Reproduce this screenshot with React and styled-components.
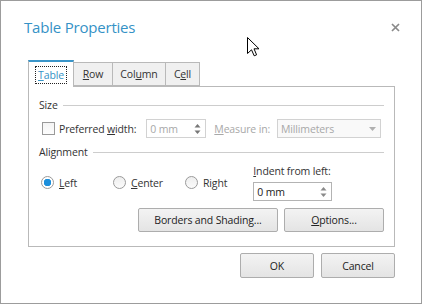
import React from "react";
import styled, { createGlobalStyle } from "styled-components";

const Global = createGlobalStyle`
  html, body { margin: 0; padding: 0; background: #fff; }
  body {
    font-family: "Open Sans", "Noto Sans", sans-serif;
    font-size: 10.5px;
    letter-spacing: -0.15px;
    color: #1e1e1e;
  }
  * { box-sizing: border-box; }
`;

const Dialog = styled.div`
  position: relative;
  width: 422px;
  height: 304px;
  border: 1px solid #9c9c9c;
  background: #fff;
  display: flex;
  flex-direction: column;
`;

const Header = styled.div`
  display: flex;
  align-items: center;
  justify-content: space-between;
  padding: 15px 21px 0 23px;
  height: 37px;
`;

const Title = styled.h1`
  margin: 0;
  font-weight: 400;
  font-size: 15px;
  letter-spacing: -0.2px;
  line-height: 22px;
  color: #3592c6;
`;

const Close = styled.button`
  border: 0;
  background: none;
  padding: 0;
  width: 9px;
  height: 9px;
  display: flex;
`;

const Body = styled.div`
  padding: 21px 26px 0 27px;
  display: flex;
  flex-direction: column;
`;

const TabRow = styled.div`
  display: flex;
  align-items: flex-end;
  height: 27px;
  position: relative;
  z-index: 1;
`;

const Tab = styled.div`
  width: ${(p) => p.$w}px;
  height: ${(p) => (p.$active ? "27px" : "24px")};
  margin-bottom: ${(p) => (p.$active ? "-1px" : "0")};
  border: 1px solid #b9b9b9;
  border-top: ${(p) => (p.$active ? "2px solid #3a95c9" : "1px solid #b9b9b9")};
  border-bottom: ${(p) => (p.$active ? "none" : "1px solid #b9b9b9")};
  margin-left: ${(p) => (p.$first ? "0" : "-1px")};
  background: ${(p) => (p.$active ? "#fff" : "#f0f0f0")};
  color: ${(p) => (p.$active ? "#3592c6" : "#333")};
  display: flex;
  align-items: center;
  justify-content: center;
  line-height: 14px;
`;

const Focus = styled.span`
  outline: 1px dotted #222;
  outline-offset: 1px;
  padding: 0 1px;
`;

const Panel = styled.div`
  border: 1px solid #b9b9b9;
  height: 161px;
  padding: 10px 10px 11px 10px;
  display: flex;
  flex-direction: column;
`;

const GroupHeader = styled.div`
  display: flex;
  align-items: center;
  height: 16px;
  margin-top: ${(p) => p.$mt || 0}px;
  color: #333;
  &::after {
    content: "";
    flex: 1;
    height: 1px;
    background: #cdcdcd;
    margin-left: 5px;
  }
`;

const Row = styled.div`
  display: flex;
  align-items: center;
  margin-top: ${(p) => p.$mt || 0}px;
  padding-left: ${(p) => p.$pl || 0}px;
`;

const Checkbox = styled.span`
  width: 13px;
  height: 13px;
  border: 1px solid #9a9a9a;
  background: linear-gradient(#f4f4f4, #fdfdfd);
  margin-right: 4px;
`;

const Label = styled.span`
  color: ${(p) => (p.$disabled ? "#a8a8a8" : "#333")};
  margin-left: ${(p) => p.$ml || 0}px;
  white-space: nowrap;
`;

const Field = styled.div`
  width: ${(p) => p.$w}px;
  height: 19px;
  border: 1px solid ${(p) => (p.$disabled ? "#d2d2d2" : "#b3b3b3")};
  background: ${(p) => (p.$select ? "#f9f9f9" : "#fff")};
  margin-left: ${(p) => p.$ml || 0}px;
  display: flex;
  align-items: center;
  justify-content: space-between;
  padding: 0 4px 0 3px;
  color: ${(p) => (p.$disabled ? "#a8a8a8" : "#222")};
`;

const AlignRow = styled.div`
  display: flex;
  align-items: center;
  margin-top: 4px;
  padding-left: 2px;
`;

const RadioOption = styled.label`
  display: flex;
  align-items: center;
  width: ${(p) => (p.$w ? p.$w + "px" : "auto")};
  color: #333;
`;

const Radio = styled.span`
  width: 13px;
  height: 13px;
  border-radius: 50%;
  border: 1px solid #9a9a9a;
  background: ${(p) =>
    p.$checked
      ? "radial-gradient(circle, #1c8fdc 0 3.5px, #fff 4px)"
      : "linear-gradient(#eeeeee, #fbfbfb)"};
  margin-right: 5px;
`;

const IndentBlock = styled.div`
  display: flex;
  flex-direction: column;
  margin-left: ${(p) => p.$ml}px;
  gap: 4px;
`;

const ButtonRow = styled.div`
  display: flex;
  justify-content: flex-end;
  gap: ${(p) => p.$gap}px;
  margin-top: ${(p) => p.$mt}px;
`;

const Button = styled.button`
  width: ${(p) => p.$w}px;
  height: ${(p) => p.$h}px;
  border: 1px solid #adadad;
  border-radius: 2px;
  background: linear-gradient(#f3f3f3, #e4e4e4);
  font: inherit;
  letter-spacing: inherit;
  color: #222;
  padding: 0;
`;

const Cursor = styled.svg`
  position: absolute;
  left: 246px;
  top: 36px;
`;

const Spin = ({ color }) => (
  <svg width="7" height="12" viewBox="0 0 7 12">
    <path d="M0.5 4.5 L3.5 1 L6.5 4.5 Z" fill={color} />
    <path d="M0.5 7.5 L3.5 11 L6.5 7.5 Z" fill={color} />
  </svg>
);

export default function App() {
  return (
    <>
      <Global />
      <Dialog>
        <Header>
          <Title>Table Properties</Title>
          <Close aria-label="Close">
            <svg width="9" height="9" viewBox="0 0 9 9">
              <path d="M1 1 L8 8 M8 1 L1 8" stroke="#8a8a8a" strokeWidth="1.7" />
            </svg>
          </Close>
        </Header>
        <Body>
          <TabRow>
            <Tab $active $first $w={46}>
              <Focus>
                <u>T</u>able
              </Focus>
            </Tab>
            <Tab $w={40}>
              <span>
                <u>R</u>ow
              </span>
            </Tab>
            <Tab $w={54}>
              <span>
                Col<u>u</u>mn
              </span>
            </Tab>
            <Tab $w={35}>
              <span>
                C<u>e</u>ll
              </span>
            </Tab>
          </TabRow>
          <Panel>
            <GroupHeader>Size</GroupHeader>
            <Row $mt={6} $pl={3}>
              <Checkbox />
              <Label>
                Preferred <u>w</u>idth:
              </Label>
              <Field $w={60} $ml={10} $disabled>
                <span>0 mm</span>
                <Spin color="#777" />
              </Field>
              <Label $disabled $ml={8}>
                <u>M</u>easure in:
              </Label>
              <Field $w={104} $ml={7} $disabled $select>
                <span>Millimeters</span>
                <svg width="7" height="4" viewBox="0 0 7 4">
                  <path d="M0 0 L7 0 L3.5 4 Z" fill="#b0b0b0" />
                </svg>
              </Field>
            </Row>
            <GroupHeader $mt={6}>Alignment</GroupHeader>
            <AlignRow>
              <RadioOption $w={72}>
                <Radio $checked />
                <span>
                  <u>L</u>eft
                </span>
              </RadioOption>
              <RadioOption $w={72}>
                <Radio />
                <span>
                  <u>C</u>enter
                </span>
              </RadioOption>
              <RadioOption>
                <Radio />
                <span>
                  Ri<u>g</u>ht
                </span>
              </RadioOption>
              <IndentBlock $ml={26}>
                <Label>
                  <u>I</u>ndent from left:
                </Label>
                <Field $w={79}>
                  <span>0 mm</span>
                  <Spin color="#8a8a8a" />
                </Field>
              </IndentBlock>
            </AlignRow>
            <ButtonRow $gap={6} $mt={7}>
              <Button $w={140} $h={24}>Borders and Shading...</Button>
              <Button $w={100} $h={24}>
                <u>O</u>ptions...
              </Button>
            </ButtonRow>
          </Panel>
          <ButtonRow $gap={7} $mt={6}>
            <Button $w={74} $h={25}>OK</Button>
            <Button $w={74} $h={25}>Cancel</Button>
          </ButtonRow>
        </Body>
        <Cursor width="13" height="20" viewBox="0 0 13 20">
          <path
            d="M0.5 0.5 L0.5 16.5 L4.5 12.8 L7.2 18.8 L9.6 17.8 L7 11.8 L12 11.8 Z"
            fill="#fff"
            stroke="#000"
            strokeWidth="1"
            strokeLinejoin="miter"
          />
        </Cursor>
      </Dialog>
    </>
  );
}
